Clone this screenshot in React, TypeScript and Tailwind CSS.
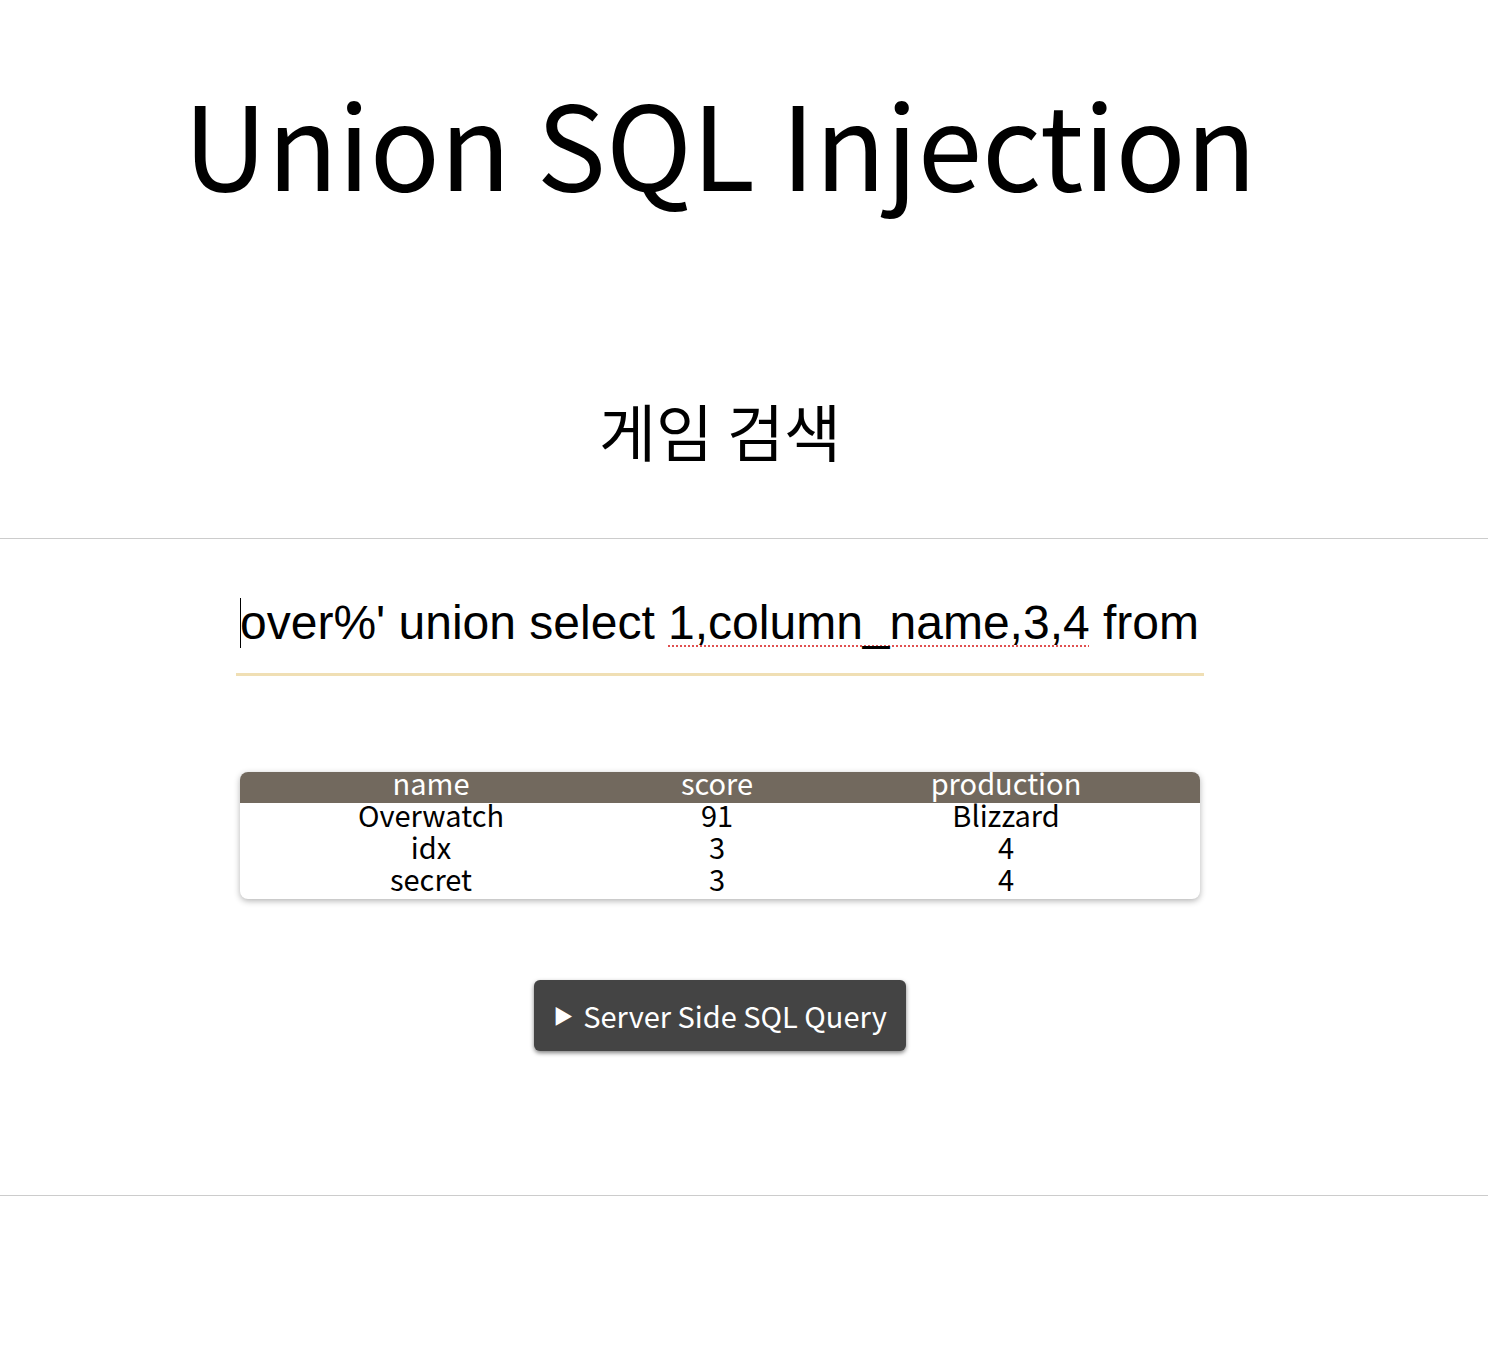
import React from "react";

const rows = [
  { name: "Overwatch", score: "91", production: "Blizzard" },
  { name: "idx", score: "3", production: "4" },
  { name: "secret", score: "3", production: "4" },
];

const kr = "font-['Noto_Sans_CJK_KR','Noto_Sans',sans-serif]";

export default function App() {
  return (
    <div className={`w-full bg-white text-black ${kr}`}>
      <div className="w-[1440px] flex flex-col items-center">
        <h1 className="mt-[65px] text-[116px] leading-[150px] font-normal">
          Union SQL Injection
        </h1>
        <h2 className="mt-[175px] text-[62px] leading-[80px] font-normal">
          게임 검색
        </h2>
      </div>
      <hr className="mt-[68px] border-0 h-px bg-[#cccccc]" />
      <div className="w-[1440px] flex flex-col items-center">
        <div className="mt-[56px] w-[968px] border-b-[3px] border-[#f0dfb4] px-1 pb-[22px]">
          <div className="relative font-['Liberation_Sans',Arial,sans-serif] text-[48px] leading-[56px] whitespace-nowrap overflow-hidden">
            <span className="absolute left-0 top-[3px] w-px h-[50px] bg-black" />
            over%' union select{" "}
            <span className="underline decoration-dotted decoration-[#e05050] decoration-2 underline-offset-[6px]">
              1,column_name,3,4
            </span>{" "}
            from
          </div>
        </div>

        <div className="mt-[96px] w-[960px] rounded-lg overflow-hidden bg-white shadow-[0_2px_6px_rgba(0,0,0,0.3)]">
          <table className="w-full border-collapse text-[29px]">
            <thead>
              <tr className="bg-[#72695e] text-white">
                <th className="w-[382px] h-[31px] leading-[21px] pb-[10px] font-normal">name</th>
                <th className="w-[190px] h-[31px] leading-[21px] pb-[10px] font-normal">score</th>
                <th className="w-[388px] h-[31px] leading-[21px] pb-[10px] font-normal">production</th>
              </tr>
            </thead>
            <tbody>
              {rows.map((r, i) => (
                <tr key={i}>
                  <td className="h-[32px] leading-[22px] pb-[10px] text-center">{r.name}</td>
                  <td className="h-[32px] leading-[22px] pb-[10px] text-center">{r.score}</td>
                  <td className="h-[32px] leading-[22px] pb-[10px] text-center">{r.production}</td>
                </tr>
              ))}
            </tbody>
          </table>
        </div>

        <button className="mt-[81px] w-[372px] h-[71px] rounded-md bg-[#444444] text-white text-[29px] shadow-[0_2px_4px_rgba(0,0,0,0.5)] flex items-center justify-center gap-[10px]">
          <span className="text-[20px]">▶</span>
          <span>Server Side SQL Query</span>
        </button>
      </div>
      <hr className="mt-[144px] border-0 h-px bg-[#cccccc]" />
      <div className="h-[157px]" />
    </div>
  );
}
